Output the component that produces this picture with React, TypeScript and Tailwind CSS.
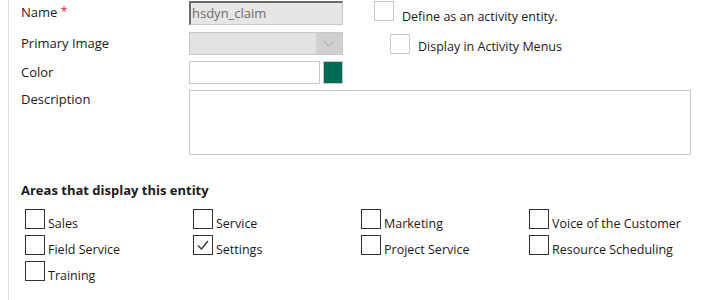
import type { ReactNode } from "react";

const areas: { label: string; checked?: boolean }[] = [
  { label: "Sales" },
  { label: "Service" },
  { label: "Marketing" },
  { label: "Voice of the Customer" },
  { label: "Field Service" },
  { label: "Settings", checked: true },
  { label: "Project Service" },
  { label: "Resource Scheduling" },
  { label: "Training" },
];

function Label({ children }: { children: ReactNode }) {
  return <div className="w-[168px] shrink-0 text-[13px] text-[#1a1a1a]">{children}</div>;
}

function AreaCheck({ label, checked }: { label: string; checked?: boolean }) {
  return (
    <div className="flex items-end h-[20px]">
      <span className="w-[20px] h-[20px] border border-[#333] bg-white flex items-center justify-center shrink-0">
        {checked && (
          <svg width="14" height="14" viewBox="0 0 14 14">
            <path d="M2 7.5 L5.5 11 L12 3" fill="none" stroke="#333" strokeWidth="1.3" />
          </svg>
        )}
      </span>
      <span className="ml-[3px] text-[12.5px] leading-[15px] text-[#1a1a1a] translate-y-[2px]">{label}</span>
    </div>
  );
}

export default function App() {
  return (
    <div
      className="w-[707px] h-[300px] bg-white overflow-hidden"
      style={{ fontFamily: '"Open Sans", "Noto Sans", sans-serif' }}
    >
      <div className="ml-[8px] h-full border-l border-[#dcdcdc] pl-[12px] pt-[1px]">
        <div className="flex items-center h-[24px]">
          <Label>
            Name <span className="text-[#e81123] text-[12px] align-top">*</span>
          </Label>
          <div className="w-[154px] h-[24px] border border-[#c8c8c8] bg-[#e6e6e6] border-l-[2px] border-l-[#6a6a6a] border-t-[2px] border-t-[#6a6a6a] pl-[1px] text-[13px] leading-[20px] text-[#6d6d6d]">
            hsdyn_claim
          </div>
          <span className="ml-[31px] w-[20px] h-[20px] border border-[#c8c8c8] bg-white self-start" />
          <span className="ml-[8px] text-[12.5px] text-[#1a1a1a] translate-y-[4px]">Define as an activity entity.</span>
        </div>

        <div className="flex items-center h-[23px] mt-[7px]">
          <Label>Primary Image</Label>
          <div className="w-[154px] h-[23px] border border-[#c8c8c8] bg-[#e2e2e2] flex justify-end">
            <div className="w-[26px] h-full bg-[#d0d0d0] flex items-center justify-center">
              <svg width="12" height="8" viewBox="0 0 12 8">
                <path d="M1 1.5 L6 6 L11 1.5" fill="none" stroke="#a6a6a6" strokeWidth="1" />
              </svg>
            </div>
          </div>
          <span className="ml-[47px] w-[20px] h-[20px] border border-[#c8c8c8] bg-white" />
          <span className="ml-[8px] text-[12.5px] text-[#1a1a1a] translate-y-[4px]">Display in Activity Menus</span>
        </div>

        <div className="flex items-center h-[23px] mt-[6px]">
          <Label>Color</Label>
          <div className="w-[131px] h-[23px] border border-[#c8c8c8] bg-white" />
          <div className="ml-[3px] w-[20px] h-[23px] border border-[#c8c8c8] bg-[#006b54]" />
        </div>

        <div className="flex items-start mt-[6px]">
          <Label>Description</Label>
          <div className="w-[502px] h-[65px] border border-[#c8c8c8] bg-white" />
        </div>

        <div className="mt-[26px] text-[13px] font-bold text-[#1a1a1a]">Areas that display this entity</div>

        <div className="mt-[8px] ml-[4px] grid grid-cols-[168px_168px_168px_168px] gap-y-[6px]">
          {areas.map((a) => (
            <AreaCheck key={a.label} label={a.label} checked={a.checked} />
          ))}
        </div>
      </div>
    </div>
  );
}
